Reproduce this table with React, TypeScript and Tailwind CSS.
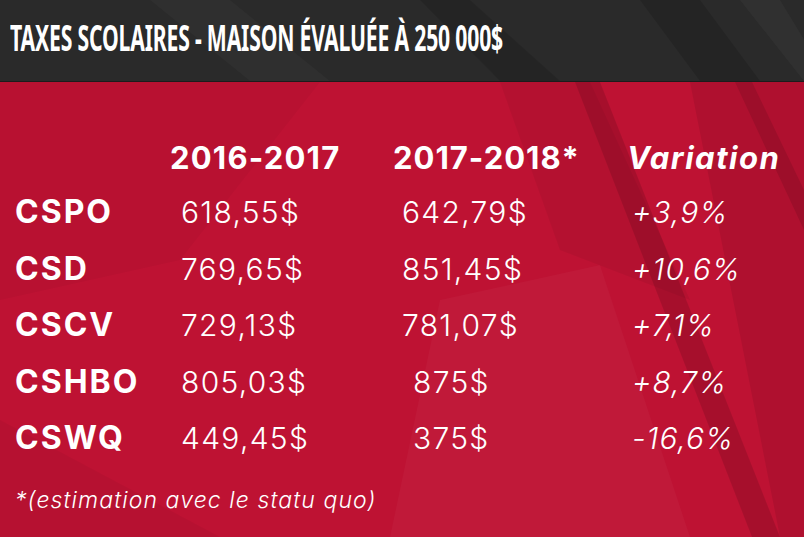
import React from 'react';

type Row = {
  name: string;
  before: string;
  after: string;
  change: string;
  indent?: boolean;
};

const rows: Row[] = [
  { name: 'CSPO', before: '618,55$', after: '642,79$', change: '+3,9%' },
  { name: 'CSD', before: '769,65$', after: '851,45$', change: '+10,6%' },
  { name: 'CSCV', before: '729,13$', after: '781,07$', change: '+7,1%' },
  { name: 'CSHBO', before: '805,03$', after: '875$', change: '+8,7%', indent: true },
  { name: 'CSWQ', before: '449,45$', after: '375$', change: '-16,6%', indent: true },
];

function Backdrop() {
  return (
    <svg
      className="pointer-events-none absolute inset-0 h-full w-full"
      viewBox="0 0 804 537"
      preserveAspectRatio="none"
    >
      {/* red facets */}
      <polygon points="0,82 320,82 180,260 0,300" fill="#000000" opacity="0.03" />
      <polygon points="500,82 590,82 690,300 560,250" fill="#000000" opacity="0.05" />
      <polygon points="575,82 600,82 780,537 752,537" fill="#000000" opacity="0.12" />
      <polygon points="690,82 804,82 804,537 780,537" fill="#000000" opacity="0.08" />
      <polygon points="735,82 752,82 804,190 804,230" fill="#000000" opacity="0.1" />
      <polygon points="440,300 600,265 690,537 390,537" fill="#ffffff" opacity="0.03" />
      <polygon points="0,420 220,537 0,537" fill="#000000" opacity="0.04" />
    </svg>
  );
}

export default function App() {
  return (
    <div className="relative h-[537px] w-[804px] overflow-hidden bg-[#be1233] text-white">
      <Backdrop />

      <div className="relative h-[82px] overflow-hidden border-b border-[#1c1c1c] bg-[#2a2a2a]">
        <svg className="absolute inset-0 h-full w-full" viewBox="0 0 804 82" preserveAspectRatio="none">
          <polygon points="150,0 230,0 330,82 250,82" fill="#ffffff" opacity="0.025" />
          <polygon points="420,0 470,0 560,82 500,82" fill="#000000" opacity="0.12" />
          <polygon points="640,0 700,0 760,82 700,82" fill="#000000" opacity="0.14" />
          <polygon points="740,0 780,0 804,40 804,82" fill="#ffffff" opacity="0.03" />
        </svg>
        <h1 className="relative ml-[10px] mt-[18px] origin-left scale-x-[0.605] whitespace-nowrap font-['Noto_Sans',sans-serif] text-[35px] font-bold leading-[40px] tracking-[-0.3px]">
          TAXES SCOLAIRES - MAISON ÉVALUÉE À 250 000$
        </h1>
      </div>

      <div className="relative px-[15px] pt-[50px] font-['Inter',sans-serif]">
        <div className="grid grid-cols-[166px_221px_233px_1fr]">
          <div className="h-[52px]" />
          <div className="-ml-[11px] text-[31px] font-bold leading-[52px] tracking-[1.2px]">2016-2017</div>
          <div className="-ml-[9px] text-[31px] font-bold leading-[52px] tracking-[1px]">2017-2018*</div>
          <div className="-ml-[8px] text-[31px] font-bold italic leading-[52px] tracking-[1.5px]">Variation</div>

          {rows.map((row) => (
            <React.Fragment key={row.name}>
              <div className="text-[32px] font-bold leading-[56.5px] tracking-[2px]">{row.name}</div>
              <div className="text-[30px] font-light leading-[56.5px] tracking-[1.3px]">{row.before}</div>
              <div
                className={`text-[30px] font-light leading-[56.5px] tracking-[1.3px] ${row.indent ? 'pl-[11px]' : ''}`}
              >
                {row.after}
              </div>
              <div className="-ml-[3px] text-[30px] font-light italic leading-[56.5px] tracking-[1px]">
                {row.change}
              </div>
            </React.Fragment>
          ))}
        </div>

        <p className="mt-[18px] text-[23px] font-light italic leading-[30px] tracking-[1.1px]">
          *(estimation avec le statu quo)
        </p>
      </div>
    </div>
  );
}
